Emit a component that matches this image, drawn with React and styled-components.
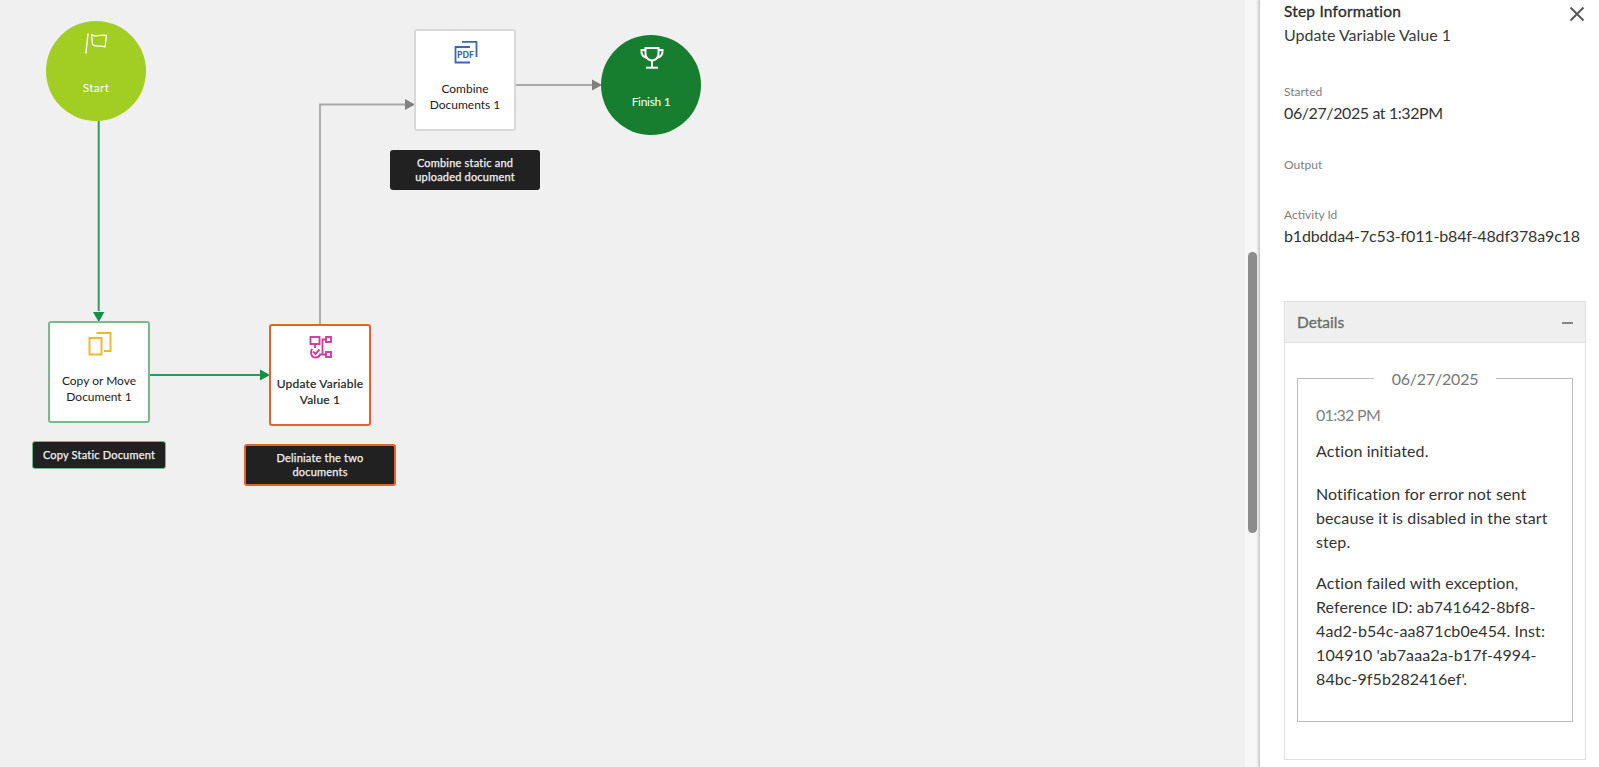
import React from "react";
import styled, { createGlobalStyle } from "styled-components";

const Global = createGlobalStyle`
  html, body { margin: 0; padding: 0; height: 100%; overflow: hidden; background: #f0f0f0; }
  body { font-family: Lato, "Noto Sans", sans-serif; color: #222; }
  * { box-sizing: border-box; }
`;

const Page = styled.div`
  display: flex;
  width: 1599px;
  height: 767px;
  overflow: hidden;
`;
const Canvas = styled.div`
  position: relative;
  width: 1245px;
  height: 767px;
  flex: none;
  background: #f0f0f0;
`;
const Edges = styled.svg`
  position: absolute;
  inset: 0;
  width: 100%;
  height: 100%;
`;
const StepBox = styled.div`
  position: absolute;
  left: ${(p) => p.$x}px;
  top: ${(p) => p.$y}px;
  width: 102px;
  height: 102px;
  padding-top: 9px;
  background: #fff;
  border: 2px solid ${(p) => p.$border};
  border-radius: 3px;
  display: flex;
  flex-direction: column;
  align-items: center;
`;
const IconSlot = styled.div`
  height: ${(p) => p.$h || 24}px;
  display: flex;
  align-items: center;
  justify-content: center;
  margin-left: 1px;
`;
const StepLabel = styled.div`
  margin-top: 17px;
  font-size: 12px;
  line-height: 16px;
  text-align: center;
  color: #1c1c1c;
  letter-spacing: ${(p) => (p.$strong ? "0.2px" : "0")};
  -webkit-text-stroke: ${(p) => (p.$strong ? "0.2px #1c1c1c" : "0")};
  width: 96px;
`;
const Circle = styled.div`
  position: absolute;
  left: ${(p) => p.$x}px;
  top: ${(p) => p.$y}px;
  width: 100px;
  height: 100px;
  border-radius: 50%;
  background: ${(p) => p.$bg};
  padding-top: 12px;
  display: flex;
  flex-direction: column;
  align-items: center;
  color: #fff;
`;
const CircleLabel = styled.div`
  margin-top: 25px;
  font-size: 12px;
  line-height: 16px;
  letter-spacing: ${(p) => p.$spacing}px;
  color: #fff;
`;
const Note = styled.div`
  position: absolute;
  left: ${(p) => p.$x}px;
  top: ${(p) => p.$y}px;
  width: ${(p) => p.$w}px;
  height: ${(p) => p.$h}px;
  background: #212121;
  border: ${(p) => (p.$border ? `${p.$bw}px solid ${p.$border}` : "0")};
  border-radius: 3px;
  color: #f1f1f1;
  font-size: 11px;
  letter-spacing: 0.2px;
  -webkit-text-stroke: 0.25px #f1f1f1;
  line-height: 14px;
  text-align: center;
  display: flex;
  align-items: center;
  justify-content: center;
  padding: 0 8px;
`;
const ScrollTrack = styled.div`
  position: relative;
  flex: none;
  width: 14px;
  height: 767px;
  background: #f7f7f7;
`;
const ScrollThumb = styled.div`
  position: absolute;
  left: 3px;
  top: 252px;
  width: 9px;
  height: 281px;
  border-radius: 5px;
  background: #8c8c8c;
`;
const Panel = styled.aside`
  flex: 1;
  height: 767px;
  background: #fff;
  border-left: 1px solid #c9c9c9;
  box-shadow: -1px 0 2px rgba(0, 0, 0, 0.18);
  padding-left: 24px;
  position: relative;
  overflow: hidden;
`;
const PanelTitle = styled.div`
  margin-top: 1px;
  font-size: 15.5px;
  line-height: 20px;
  letter-spacing: 0.2px;
  -webkit-text-stroke: 0.3px #2b2b2b;
  color: #2b2b2b;
`;
const PanelSub = styled.div`
  margin-top: 4px;
  font-size: 16px;
  line-height: 20px;
  color: #3a3a3a;
`;
const Field = styled.div`
  margin-top: ${(p) => p.$top}px;
`;
const FieldLabel = styled.div`
  font-size: 12px;
  line-height: 16px;
  color: #808080;
`;
const FieldValue = styled.div`
  margin-top: 3px;
  font-size: 16px;
  line-height: 20px;
  letter-spacing: ${(p) => p.$spacing}px;
  white-space: nowrap;
  color: #333;
`;
const Close = styled.button`
  position: absolute;
  right: 13px;
  top: 5px;
  width: 18px;
  height: 18px;
  padding: 0;
  border: 0;
  background: none;
  display: block;
`;
const Accordion = styled.section`
  width: 302px;
  height: 459px;
  margin-top: 55px;
  border: 1px solid #e0e0e0;
  overflow: hidden;
`;
const AccordionHead = styled.div`
  height: 41px;
  background: #efefef;
  border-bottom: 1px solid #e0e0e0;
  display: flex;
  align-items: center;
  justify-content: space-between;
  padding: 0 12px;
  font-size: 15.5px;
  -webkit-text-stroke: 0.3px #6a6a6a;
  color: #6a6a6a;
`;
const Minus = styled.span`
  width: 11px;
  height: 1.5px;
  background: #888;
  margin-top: 2px;
`;
const Log = styled.fieldset`
  margin: 27px 12px 0 12px;
  padding: 0 18px;
  width: 276px;
  height: 352px;
  border: 1px solid #bdbdbd;
`;
const LogDate = styled.legend`
  margin: 0 auto;
  padding: 0 18px;
  font-size: 16px;
  line-height: 17px;
  letter-spacing: -0.2px;
  color: #777;
`;
const LogTime = styled.div`
  margin-top: 18px;
  font-size: 16px;
  line-height: 20px;
  letter-spacing: -0.7px;
  color: #808080;
`;
const LogLine = styled.p`
  margin: ${(p) => p.$top}px 0 0;
  font-size: 16px;
  line-height: 24px;
  letter-spacing: 0.1px;
  color: #333;
  overflow-wrap: break-word;
`;

const FlagIcon = () => (
  <svg width="24" height="22" viewBox="0 0 24 22" fill="none" stroke="#fff" strokeWidth="1.3">
    <path d="M3 1 L0.9 20" strokeLinecap="round" strokeWidth="1.4" />
    <path d="M6.5 1.5 C10 5 14 1 21.5 2.5 L20 14 C15 11.5 11 15 7.5 11.5 Z" strokeLinejoin="round" />
  </svg>
);
const TrophyIcon = () => (
  <svg width="24" height="22" viewBox="0 0 24 22" fill="none" stroke="#fff" strokeWidth="2">
    <path d="M5.5 1 H18.5 V7 C18.5 11 15 13.5 12 13.5 C9 13.5 5.5 11 5.5 7 Z" />
    <path d="M5.5 3 H1.5 V5 C1.5 8 3.5 10 7.5 11" />
    <path d="M18.5 3 H22.5 V5 C22.5 8 20.5 10 16.5 11" />
    <path d="M12 13.5 V20" />
    <path d="M6 20.7 H18" />
  </svg>
);
const CopyIcon = () => (
  <svg width="24" height="24" viewBox="0 0 24 24" fill="none" stroke="#efb92c" strokeWidth="2">
    <rect x="1.5" y="6" width="12" height="16.5" />
    <path d="M8.5 1 H22.5 V19 H16" />
  </svg>
);
const VariableIcon = () => (
  <svg width="24" height="24" viewBox="0 0 24 24" fill="none" stroke="#cc3d9b" strokeWidth="1.9">
    <rect x="1.5" y="2" width="9" height="7" />
    <rect x="17" y="2" width="5" height="5" />
    <rect x="17" y="17" width="5" height="5" />
    <path d="M6 9 V13" />
    <path d="M4 16.5 L6.5 19 L10.5 14.5" />
    <path d="M3.5 14 C1.5 15 1 22.5 6.5 22.5 C9 22.5 10.5 21.5 11 19.5 H17" />
    <path d="M13.5 19.5 V4.5 H17" />
  </svg>
);
const PdfIcon = () => (
  <svg width="24" height="24" viewBox="0 0 24 24" fill="none" stroke="#3a66b8" strokeWidth="1.8">
    <path d="M8 1.9 H22.5 V17" />
    <path d="M16 7 H1.5 V22.5 H16" />
    <text x="3" y="17.5" fontFamily="Lato, sans-serif" fontSize="8.6" fontWeight="900" fill="#3a66b8" stroke="none">PDF</text>
  </svg>
);

export default function App() {
  return (
    <Page>
      <Global />
      <Canvas>
        <Edges viewBox="0 0 1245 767">
          <path d="M98.7 121 V311" stroke="#2f9e60" strokeWidth="2" fill="none" />
          <path d="M93 312 H104.4 L98.7 322 Z" fill="#0f9148" />
          <path d="M150 375 H260" stroke="#2a9a5a" strokeWidth="2" fill="none" />
          <path d="M260 369.5 L270 375 L260 380.5 Z" fill="#0f9148" />
          <path d="M320 324 V104.5 H405" stroke="#a8a8a8" strokeWidth="1.8" fill="none" />
          <path d="M405 99 L415 104.5 L405 110 Z" fill="#808080" />
          <path d="M516 85 H592" stroke="#a8a8a8" strokeWidth="1.8" fill="none" />
          <path d="M592 79.5 L602 85 L592 90.5 Z" fill="#808080" />
        </Edges>

        <Circle $x={46} $y={21} $bg="#a2cd22">
          <IconSlot $h={22}><FlagIcon /></IconSlot>
          <CircleLabel $spacing={0.3}>Start</CircleLabel>
        </Circle>
        <Circle $x={601} $y={35} $bg="#177e2f">
          <IconSlot $h={22}><TrophyIcon /></IconSlot>
          <CircleLabel $spacing={-0.3}>Finish 1</CircleLabel>
        </Circle>

        <StepBox $x={48} $y={321} $border="#7ab98f">
          <IconSlot><CopyIcon /></IconSlot>
          <StepLabel>Copy or Move Document 1</StepLabel>
        </StepBox>
        <StepBox $x={269} $y={324} $border="#e8602c">
          <IconSlot><VariableIcon /></IconSlot>
          <StepLabel $strong>Update Variable Value 1</StepLabel>
        </StepBox>
        <StepBox $x={414} $y={29} $border="#d8d8d8">
          <IconSlot><PdfIcon /></IconSlot>
          <StepLabel>Combine Documents 1</StepLabel>
        </StepBox>

        <Note $x={32} $y={441} $w={134} $h={28} $border="#6fb98a" $bw={1}>Copy Static Document</Note>
        <Note $x={244} $y={444} $w={152} $h={42} $border="#e8602c" $bw={2}>Deliniate the two documents</Note>
        <Note $x={390} $y={150} $w={150} $h={40}>Combine static and uploaded document</Note>
      </Canvas>

      <ScrollTrack><ScrollThumb /></ScrollTrack>

      <Panel>
        <PanelTitle>Step Information</PanelTitle>
        <PanelSub>Update Variable Value 1</PanelSub>
        <Close aria-label="Close">
          <svg width="18" height="18" viewBox="0 0 18 18" stroke="#5a5a5a" strokeWidth="2" fill="none">
            <path d="M2.5 2.5 L15.5 15.5 M15.5 2.5 L2.5 15.5" />
          </svg>
        </Close>
        <Field $top={39}>
          <FieldLabel>Started</FieldLabel>
          <FieldValue $spacing={-0.4}>06/27/2025 at 1:32PM</FieldValue>
        </Field>
        <Field $top={34}>
          <FieldLabel>Output</FieldLabel>
        </Field>
        <Field $top={34}>
          <FieldLabel>Activity Id</FieldLabel>
          <FieldValue $spacing={-0.15}>b1dbdda4-7c53-f011-b84f-48df378a9c18</FieldValue>
        </Field>
        <Accordion>
          <AccordionHead>Details<Minus /></AccordionHead>
          <Log>
            <LogDate>06/27/2025</LogDate>
            <LogTime>01:32 PM</LogTime>
            <LogLine $top={14}>Action initiated.</LogLine>
            <LogLine $top={19}>Notification for error not sent because it is disabled in the start step.</LogLine>
            <LogLine $top={17}>Action failed with exception, Reference ID: ab741642-8bf8-4ad2-b54c-aa871cb0e454. Inst: 104910 'ab7aaa2a-b17f-4994-84bc-9f5b282416ef'.</LogLine>
          </Log>
        </Accordion>
      </Panel>
    </Page>
  );
}
